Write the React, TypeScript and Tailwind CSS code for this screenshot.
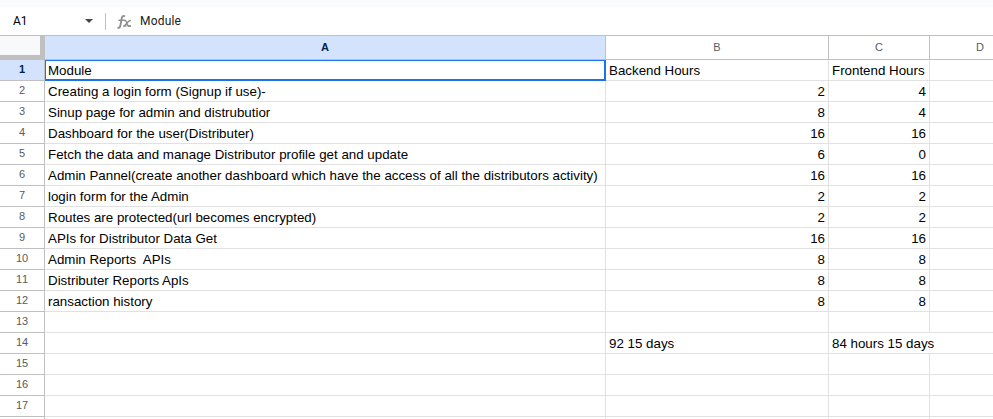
type Row = { a?: string; b?: string | number; c?: string | number };

const rows: Row[] = [
  { a: 'Module', b: 'Backend Hours', c: 'Frontend Hours' },
  { a: 'Creating a login form (Signup if use)-', b: 2, c: 4 },
  { a: 'Sinup page for admin and distrubutior', b: 8, c: 4 },
  { a: 'Dashboard for the user(Distributer)', b: 16, c: 16 },
  { a: 'Fetch the data and manage Distributor profile get and update', b: 6, c: 0 },
  { a: 'Admin Pannel(create another dashboard which have the access of all the distributors activity)', b: 16, c: 16 },
  { a: 'login form for the Admin', b: 2, c: 2 },
  { a: 'Routes are protected(url becomes encrypted)', b: 2, c: 2 },
  { a: 'APIs for Distributor Data Get', b: 16, c: 16 },
  { a: 'Admin Reports  APIs', b: 8, c: 8 },
  { a: 'Distributer Reports ApIs', b: 8, c: 8 },
  { a: 'ransaction history', b: 8, c: 8 },
  {},
  { b: '92 15 days', c: '84 hours 15 days' },
  {},
  {},
  {},
];

const columns = 'grid grid-cols-[45px_561px_223px_101px_101px]';

function Cell({ value, selected = false }: { value?: string | number; selected?: boolean }) {
  const numeric = typeof value === 'number';
  const spills = value === '84 hours 15 days';
  return (
    <div
      className={`flex h-[21px] items-center whitespace-pre text-[13.333px] leading-[15px] text-black ${
        selected
          ? 'border-t border-r-2 border-b-2 border-l border-[#1a73e8] pl-[2px]'
          : `border-b border-[#e1e1e1] pl-[3px] pr-[3px] pt-px ${spills ? '' : 'border-r'}`
      } ${numeric ? 'justify-end' : ''}`}
    >
      {value}
    </div>
  );
}

function ColumnHeader({ label, active = false }: { label: string; active?: boolean }) {
  return (
    <div
      className={`flex items-center justify-center border-r border-b border-[#c0c0c0] text-[11px] ${
        active ? 'bg-[#d3e3fd] font-bold text-[#041e49]' : 'bg-white text-[#575b5f]'
      }`}
    >
      {label}
    </div>
  );
}

function FormulaBar() {
  return (
    <div className="flex h-[29px] items-center border-b border-[#c0c0c0] bg-white font-[Roboto,sans-serif] text-[12px] text-[#202124]">
      <div className="w-[85px] pl-[13px] text-black">A1</div>
      <svg className="h-1 w-2" viewBox="0 0 8 4" fill="#444746">
        <path d="M0 0h8L4 4z" />
      </svg>
      <div className="ml-3 h-[17px] w-px bg-[#c0c0c0]" />
      <svg className="ml-[11px] mt-px h-4 w-[15px]" viewBox="0 0 15 16" fill="none" stroke="#8f8f8f">
        <path strokeWidth="1.9" d="M8 2.3C6 1.4 5.1 2.5 4.7 4.4L3.4 11.4C3.1 13.3 2.2 14.1.5 13.6" />
        <path strokeWidth="1.5" d="M1.5 6.3h5.3M6.8 6.5c1.5-.6 2.2.1 2.6 1.5l.8 2.4c.5 1.5 1.4 2 3.4 1.5" />
        <path strokeWidth="1.5" d="M13.9 6.5c-1.6-.4-2.6.7-3.7 2.3s-2 3.6-4.1 3M6.3 12h3M11 12h3" />
      </svg>
      <div className="ml-[8px] tracking-[0.2px]">Module</div>
    </div>
  );
}

export default function App() {
  return (
    <div className="h-[419px] w-[993px] overflow-hidden bg-white font-['Liberation_Sans',Arial,sans-serif]">
      <div className="h-[7px] bg-[#f9fbfd]" />
      <FormulaBar />
      <div className={`${columns} h-6`}>
        <div className="border-r-[5px] border-b-[5px] border-[#c0c0c0] bg-[#f8f9fa]" />
        <ColumnHeader label="A" active />
        <ColumnHeader label="B" />
        <ColumnHeader label="C" />
        <ColumnHeader label="D" />
      </div>
      {rows.map((row, i) => (
        <div key={i} className={columns}>
          <div
            className={`flex h-[21px] items-center justify-center border-r border-b border-[#c0c0c0] pb-[2px] text-[11px] leading-3 [font-kerning:none] ${
              i === 0 ? 'bg-[#d3e3fd] font-bold text-[#041e49]' : 'text-[#575b5f]'
            }`}
          >
            {i + 1}
          </div>
          <Cell value={row.a} selected={i === 0} />
          <Cell value={row.b} />
          <Cell value={row.c} />
          <Cell />
        </div>
      ))}
      <div className={`${columns} h-[2px]`}>
        <div className="border-r border-[#c0c0c0]" />
        <div className="border-r border-[#e1e1e1]" />
        <div className="border-r border-[#e1e1e1]" />
        <div className="border-r border-[#e1e1e1]" />
      </div>
    </div>
  );
}
